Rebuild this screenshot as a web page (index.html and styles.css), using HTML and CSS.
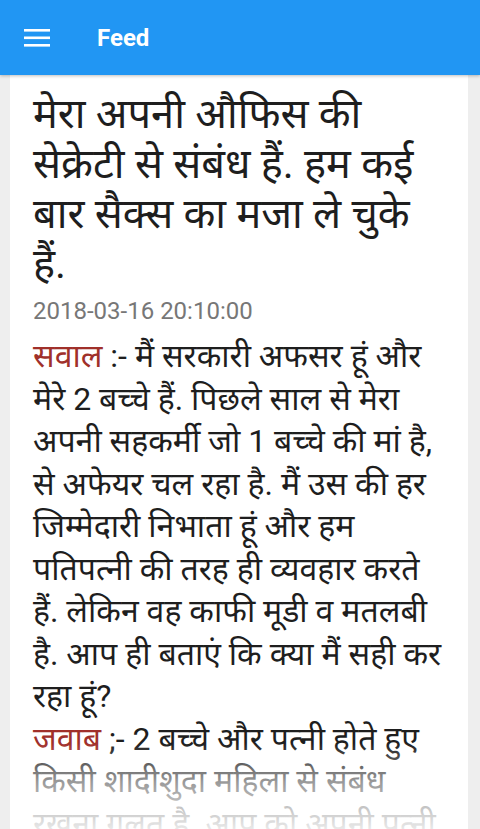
FILE: index.html
```html
<!DOCTYPE html>
<html lang="hi">
<head>
<meta charset="utf-8">
<title>Feed</title>
<link rel="stylesheet" href="styles.css">
</head>
<body>
<header class="appbar">
  <svg class="menu" width="26" height="20" viewBox="0 0 26 20" aria-hidden="true">
    <rect x="0" y="1" width="26" height="2.6" fill="#fff"/>
    <rect x="0" y="8.5" width="26" height="2.6" fill="#fff"/>
    <rect x="0" y="16" width="26" height="2.6" fill="#fff"/>
  </svg>
  <span class="title">Feed</span>
</header>
<main class="content">
  <article class="card">
    <h1 class="headline">मेरा अपनी औफिस की सेक्रेटी से संबंध हैं. हम कई बार सैक्स का मजा ले चुके हैं.</h1>
    <div class="date">2018-03-16 20:10:00</div>
    <p class="body"><span class="label">सवाल</span> :- मैं सरकारी अफसर हूं और मेरे 2 बच्चे हैं. पिछले साल से मेरा अपनी सहकर्मी जो 1 बच्चे की मां है, से अफेयर चल रहा है. मैं उस की हर जिम्मेदारी निभाता हूं और हम पतिपत्नी की तरह ही व्यवहार करते हैं. लेकिन वह काफी मूडी व मतलबी है. आप ही बताएं कि क्या मैं सही कर रहा हूं?<br><span class="label">जवाब</span> ;- 2 बच्चे और पत्नी होते हुए किसी शादीशुदा महिला से संबंध रखना गलत है. आप को अपनी पत्नी और बच्चों के प्रति ईमानदार रहना चाहिए.</p>
    <div class="fade"></div>
  </article>
</main>
</body>
</html>
```
FILE: styles.css
```css
html, body {
  margin: 0;
  padding: 0;
  height: 100%;
  overflow: hidden;
}
body {
  background: #eeeeee;
  font-family: Roboto, "Noto Sans", "Noto Sans Devanagari", sans-serif;
}
.appbar {
  height: 75px;
  background: #2196f3;
  display: flex;
  align-items: center;
  padding-left: 24px;
  box-shadow: 0 1px 3px rgba(0,0,0,0.25);
  position: relative;
  z-index: 2;
}
.menu {
  display: block;
}
.title {
  color: #fff;
  font-weight: bold;
  font-size: 24px;
  margin-left: 47px;
}
.content {
  padding: 0 12px 0 10px;
}
.card {
  background: #fff;
  padding: 14px 23px 0 23px;
  position: relative;
  height: 740px;
  overflow: hidden;
}
.headline {
  margin: 0;
  font-size: 41.5px;
  font-weight: normal;
  line-height: 50px;
  color: #1e1e1e;
}
.date {
  margin-top: 8px;
  font-size: 24px;
  line-height: 28px;
  color: #777777;
}
.body {
  margin: 10px 0 0 0;
  font-size: 32px;
  line-height: 42.5px;
  color: #1e1e1e;
}
.label {
  color: #a0302a;
}
.fade {
  position: absolute;
  left: 0;
  right: 0;
  bottom: 0;
  height: 86px;
  background: linear-gradient(to bottom, rgba(255,255,255,0) 0%, rgba(255,255,255,0.55) 45%, rgba(255,255,255,0.9) 100%);
}
```
